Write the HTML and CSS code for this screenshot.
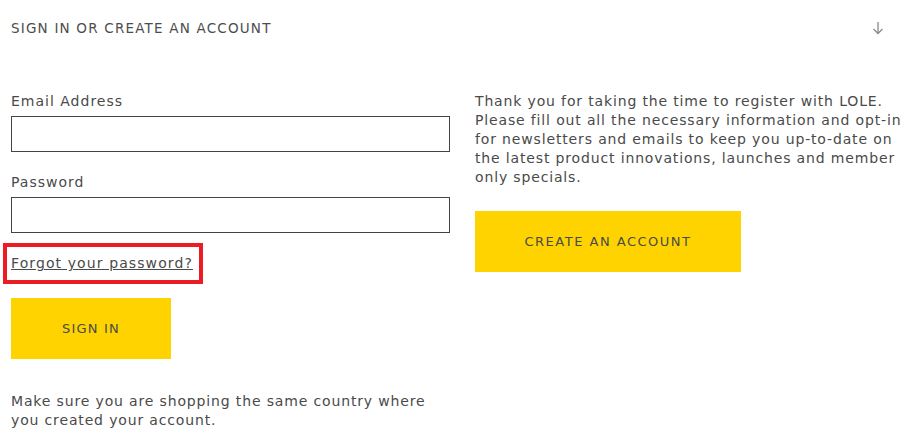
FILE: index.html
```html
<!DOCTYPE html>
<html lang="en">
<head>
  <meta charset="UTF-8">
  <title>Sign in or create an account</title>
  <meta name="viewport" content="width=device-width, initial-scale=1.0">
  <link rel="stylesheet" href="styles.css">
</head>
<body>

<div class="cabecera">
  <h2>Sign in or create an account</h2>
  <svg class="flecha" width="12" height="14" viewBox="0 0 12 14" fill="none" stroke="#8a8a8a" stroke-width="1.3">
    <path d="M6 1v11.5"/>
    <path d="M1.5 8l4.5 4.5 4.5-4.5"/>
  </svg>
</div>

<div class="columnas">
  <div class="login">
    <label for="email">Email Address</label>
    <input type="email" id="email">

    <label for="pass">Password</label>
    <input type="password" id="pass">

    <div class="marca">
      <a href="#">Forgot your password?</a>
    </div>

    <button class="boton boton-login">Sign in</button>

    <p class="nota">Make sure you are shopping the same country where you created your account.</p>
  </div>

  <div class="registro">
    <p>Thank you for taking the time to register with LOLE. Please fill out all the necessary information and opt-in for newsletters and emails to keep you up-to-date on the latest product innovations, launches and member only specials.</p>
    <button class="boton boton-crear">Create an account</button>
  </div>
</div>

</body>
</html>
```

FILE: styles.css
```css
body {
  font-family: 'DejaVu Sans', sans-serif;
  color: #4a4a4a;
  background: white;
  margin: 0;
  padding: 0 11px;
}
.cabecera {
  display: flex;
  justify-content: space-between;
  align-items: center;
  height: 55px;
  padding-right: 26px;
}
.cabecera h2 {
  margin: 0;
  font-size: 13.5px;
  font-weight: normal;
  text-transform: uppercase;
  letter-spacing: 1.2px;
  color: #4d4d4d;
}
.flecha {
  display: block;
}
.columnas {
  display: grid;
  grid-template-columns: 439px 1fr;
  gap: 25px;
  padding-top: 37px;
}
label {
  display: block;
  font-size: 14px;
  letter-spacing: 1px;
  line-height: 19px;
  margin-bottom: 5px;
}
input {
  display: block;
  width: 100%;
  height: 36px;
  border: 1px solid #444;
  box-sizing: border-box;
  margin-bottom: 21px;
  font-size: 14px;
}
.marca {
  width: fit-content;
  border: 4px solid #ec1c24;
  margin: -11px 0 0 -8px;
  padding: 6px 6px 7px 4px;
  line-height: 19px;
}
.marca a {
  color: #4a4a4a;
  font-size: 14px;
  letter-spacing: 1.1px;
  line-height: 19px;
}
.boton {
  display: block;
  height: 61px;
  border: none;
  background: #fed300;
  color: #4a4a4a;
  font-family: inherit;
  font-size: 13px;
  letter-spacing: 1.2px;
  text-transform: uppercase;
  cursor: pointer;
}
.boton-login {
  width: 160px;
  margin-top: 14px;
}
.boton-crear {
  width: 266px;
  margin-top: 24px;
  letter-spacing: 1.5px;
}
p {
  margin: 0;
  font-size: 14px;
  letter-spacing: 0.85px;
  line-height: 19px;
}
.nota {
  margin-top: 33px;
  width: 430px;
}
```
